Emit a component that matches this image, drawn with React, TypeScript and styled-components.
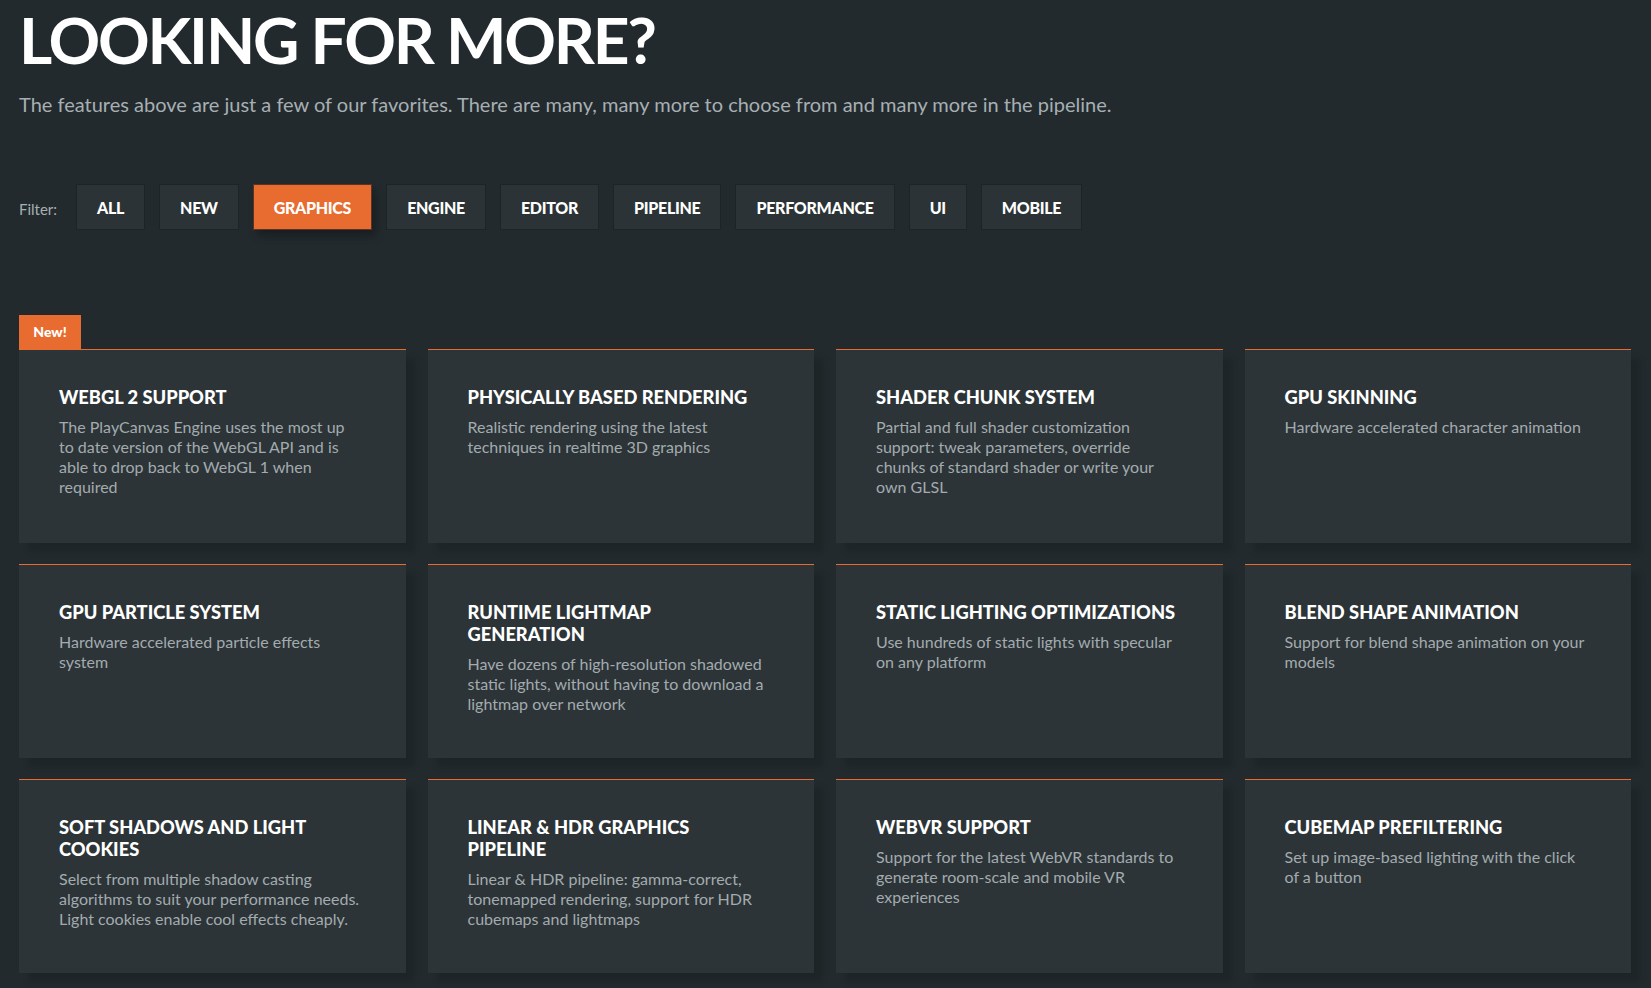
import React from "react";
import styled, { createGlobalStyle } from "styled-components";

const GlobalStyle = createGlobalStyle`
  html, body { margin: 0; padding: 0; background: #222a2d; }
  body { font-family: Lato, "Noto Sans", sans-serif; }
  * { box-sizing: border-box; }
`;

const Page = styled.div`
  padding: 8px 20px 40px 19px;
  min-height: 988px;
  background: #222a2d;
  color: #fff;
`;

const Title = styled.h1`
  margin: 0;
  font-family: Lato, sans-serif;
  font-weight: 700;
  font-size: 64px;
  line-height: 64px;
  letter-spacing: -2.2px;
  color: #ffffff;
`;

const Lead = styled.p`
  margin: 20px 0 0;
  font-size: 20px;
  line-height: 24px;
  color: #a7afb3;
`;

const FilterBar = styled.div`
  display: flex;
  align-items: center;
  gap: 14px;
  margin-top: 68px;
`;

const FilterLabel = styled.span`
  font-size: 15px;
  color: #a7afb3;
  margin-right: 5px;
  padding-top: 4px;
`;

const FilterButton = styled.button<{ $active?: boolean }>`
  height: 46px;
  padding: 0 20px;
  border: 1px solid ${(p) => (p.$active ? "#5c3322" : "#1d2426")};
  background: ${(p) => (p.$active ? "#e86b30" : "#2b3336")};
  color: #ffffff;
  font-family: Lato, sans-serif;
  font-weight: 900;
  font-size: 16px;
  letter-spacing: -0.3px;
  text-transform: uppercase;
  box-shadow: ${(p) => (p.$active ? "4px 6px 8px rgba(0,0,0,0.28)" : "none")};
  cursor: pointer;
`;

const Grid = styled.div`
  display: grid;
  grid-template-columns: repeat(4, 1fr);
  column-gap: 22px;
  row-gap: 21px;
  margin-top: 119px;
`;

const Card = styled.div`
  position: relative;
  height: 194px;
  background: #2c3437;
  border-top: 1px solid #e86b30;
  padding: 36px 44px 20px 40px;
  box-shadow: 9px 9px 6px rgba(0, 0, 0, 0.12);
`;

const Badge = styled.span`
  position: absolute;
  left: 0;
  top: -35px;
  width: 62px;
  height: 34px;
  background: #e86b30;
  color: #fff;
  font-weight: 900;
  font-size: 14px;
  display: flex;
  align-items: center;
  justify-content: center;
  padding-bottom: 2px;
`;

const CardTitle = styled.h3`
  margin: 0;
  font-family: Lato, sans-serif;
  font-weight: 900;
  font-size: 18.3px;
  line-height: 22px;
  text-transform: uppercase;
  color: #ffffff;
`;

const CardText = styled.p`
  margin: 9px 0 0;
  font-size: 16px;
  line-height: 20px;
  color: #a3abaf;
`;

const filters = ["All", "New", "Graphics", "Engine", "Editor", "Pipeline", "Performance", "UI", "Mobile"];

const features: { title: string; text: string; isNew?: boolean }[] = [
  { title: "WebGL 2 Support", text: "The PlayCanvas Engine uses the most up to date version of the WebGL API and is able to drop back to WebGL 1 when required", isNew: true },
  { title: "Physically Based Rendering", text: "Realistic rendering using the latest techniques in realtime 3D graphics" },
  { title: "Shader Chunk System", text: "Partial and full shader customization support: tweak parameters, override chunks of standard shader or write your own GLSL" },
  { title: "GPU Skinning", text: "Hardware accelerated character animation" },
  { title: "GPU Particle System", text: "Hardware accelerated particle effects system" },
  { title: "Runtime Lightmap Generation", text: "Have dozens of high-resolution shadowed static lights, without having to download a lightmap over network" },
  { title: "Static Lighting Optimizations", text: "Use hundreds of static lights with specular on any platform" },
  { title: "Blend Shape Animation", text: "Support for blend shape animation on your models" },
  { title: "Soft Shadows and Light Cookies", text: "Select from multiple shadow casting algorithms to suit your performance needs. Light cookies enable cool effects cheaply." },
  { title: "Linear & HDR Graphics Pipeline", text: "Linear & HDR pipeline: gamma-correct, tonemapped rendering, support for HDR cubemaps and lightmaps" },
  { title: "WebVR Support", text: "Support for the latest WebVR standards to generate room-scale and mobile VR experiences" },
  { title: "Cubemap Prefiltering", text: "Set up image-based lighting with the click of a button" },
];

export default function App() {
  return (
    <>
      <GlobalStyle />
      <Page>
        <Title>LOOKING FOR MORE?</Title>
        <Lead>
          The features above are just a few of our favorites. There are many, many more to choose from and many more in the pipeline.
        </Lead>
        <FilterBar>
          <FilterLabel>Filter:</FilterLabel>
          {filters.map((f) => (
            <FilterButton key={f} $active={f === "Graphics"}>
              {f}
            </FilterButton>
          ))}
        </FilterBar>
        <Grid>
          {features.map((c) => (
            <Card key={c.title}>
              {c.isNew && <Badge>New!</Badge>}
              <CardTitle>{c.title}</CardTitle>
              <CardText>{c.text}</CardText>
            </Card>
          ))}
        </Grid>
      </Page>
    </>
  );
}
